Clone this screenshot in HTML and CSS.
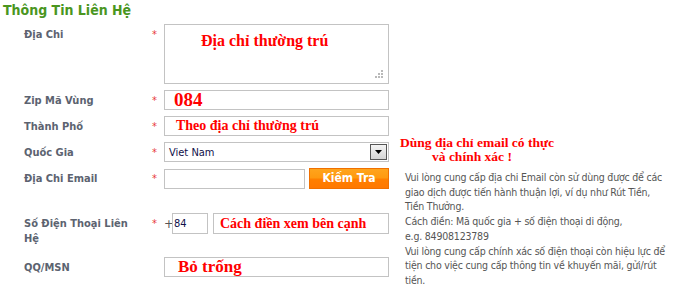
FILE: index.html
```html
<!DOCTYPE html>
<html lang="vi">
<head>
<meta charset="utf-8">
<title>Thông Tin Liên Hệ</title>
<link rel="stylesheet" href="styles.css">
</head>
<body>
<h2 class="title">Thông Tin Liên Hệ</h2>
<div class="wrap">
  <div class="form">
    <div class="row row-area">
      <label class="lbl">Địa Chi</label>
      <span class="star">*</span>
      <div class="field area-box">
        <div class="area"><span class="red r16">Địa chỉ thường trú</span></div>
        <svg class="grip" width="9" height="9" viewBox="0 0 9 9"><g fill="#b9b9b9"><rect x="6" y="0" width="2" height="2"/><rect x="3" y="3" width="2" height="2"/><rect x="6" y="3" width="2" height="2"/><rect x="0" y="6" width="2" height="2"/><rect x="3" y="6" width="2" height="2"/><rect x="6" y="6" width="2" height="2"/></g></svg>
      </div>
    </div>
    <div class="row">
      <label class="lbl">Zip Mã Vùng</label>
      <span class="star">*</span>
      <div class="field box zip"><span class="red r18">084</span></div>
    </div>
    <div class="row">
      <label class="lbl">Thành Phố</label>
      <span class="star">*</span>
      <div class="field box city"><span class="red r14">Theo địa chỉ thường trú</span></div>
    </div>
    <div class="row">
      <label class="lbl">Quốc Gia</label>
      <span class="star">*</span>
      <div class="field box select"><span class="val">Viet Nam</span><span class="arrow"><svg width="7" height="4" viewBox="0 0 7 4"><path d="M0 0h7L3.5 4z" fill="#000"/></svg></span></div>
    </div>
    <div class="row row-email">
      <label class="lbl">Địa Chi Email</label>
      <span class="star">*</span>
      <div class="field email-field">
        <div class="box email"></div>
        <button class="btn" type="button">Kiếm Tra</button>
      </div>
    </div>
    <div class="row row-phone">
      <label class="lbl two">Số Điện Thoại Liên Hệ</label>
      <span class="star">*</span>
      <div class="field phone-field">
        <span class="plus">+</span>
        <div class="box cc"><span class="val">84</span></div>
        <div class="box phone"><span class="red r14">Cách điền xem bên cạnh</span></div>
      </div>
    </div>
    <div class="row">
      <label class="lbl">QQ/MSN</label>
      <span class="star"></span>
      <div class="field box qq"><span class="red r17">Bỏ trống</span></div>
    </div>
  </div>
  <div class="help">
    <div class="help-red">Dùng địa chỉ email có thực<br><span class="indent">và chính xác !</span></div>
    <p class="help-text">Vui lòng cung cấp địa chi Email còn sử dùng được để các<br>giao dịch được tiến hành thuận lợi, ví dụ như Rút Tiền,<br>Tiền Thưởng.<br>Cách điền: Mã quốc gia + số điện thoại di động,<br>e.g. 84908123789<br>Vui lòng cung cấp chính xác số điện thoại còn hiệu lực để<br>tiện cho việc cung cấp thông tin về khuyến mãi, gửi/rút<br>tiền.</p>
  </div>
</div>
</body>
</html>
```

FILE: styles.css
```css
* { box-sizing: border-box; }
html, body { margin: 0; padding: 0; background: #fff; }
body {
  font-family: "DejaVu Sans Condensed", "DejaVu Sans", sans-serif;
  font-size: 11px;
  color: #555;
  width: 683px;
  height: 298px;
  overflow: hidden;
}
.title {
  margin: 0;
  padding: 2px 0 0 3px;
  height: 24px;
  font-size: 14px;
  line-height: 17px;
  font-weight: bold;
  color: #4a961f;
}
.wrap { display: flex; }
.form { width: 389px; flex: none; }
.row {
  display: flex;
  align-items: flex-start;
  margin-bottom: 6px;
}
.row-email { margin-bottom: 24px; }
.row-phone { margin-bottom: 11px; }
.lbl {
  width: 149px;
  padding-left: 24px;
  padding-top: 3px;
  font-weight: bold;
  color: #5c6370;
  line-height: 15px;
  flex: none;
}
.lbl.two { padding-right: 20px; }
.star {
  width: 15px;
  flex: none;
  color: #e83a3a;
  padding-top: 4px;
  padding-left: 3px;
  line-height: 14px;
}
.field { width: 225px; flex: none; }
.box {
  border: 1px solid #c3c3c3;
  background: #fff;
  height: 20px;
  display: flex;
  align-items: center;
}
.area-box {
  position: relative;
  height: 60px;
  border: 1px solid #c3c3c3;
}
.area { padding: 7px 0 0 36px; }
.grip { position: absolute; right: 4px; bottom: 4px; }
.red {
  font-family: "Liberation Serif", "DejaVu Serif", serif;
  font-weight: bold;
  color: #f00;
  white-space: nowrap;
}
.r14 { font-size: 14px; }
.r16 { font-size: 16px; }
.r17 { font-size: 17px; }
.r18 { font-size: 19px; }
.zip { padding-left: 9px; }
.city { padding-left: 11px; }
.qq { padding-left: 13px; }
.val { color: #10104a; font-size: 11px; }
.select { padding-left: 4px; justify-content: space-between; padding-right: 1px; }
.arrow {
  width: 17px;
  height: 16px;
  border: 1px solid #555;
  background: linear-gradient(#f4f4f4, #d4d4d4);
  display: flex;
  align-items: center;
  justify-content: center;
}
.email-field { display: flex; align-items: flex-start; }
.email { width: 141px; margin-top: 1px; }
.btn {
  margin-left: 4px;
  width: 80px;
  height: 21px;
  border: 1px solid #f07000;
  background: linear-gradient(#ffa41c 0%, #ff9a10 45%, #ff7f00 55%, #ff7800 100%);
  color: #fff;
  font-family: "DejaVu Sans Condensed", "DejaVu Sans", sans-serif;
  font-size: 12px;
  font-weight: bold;
  padding: 0;
  line-height: 19px;
}
.phone-field { display: flex; align-items: center; }
.plus { width: 8px; color: #555; font-size: 13px; line-height: 21px; }
.cc { width: 36px; height: 21px; padding-left: 1px; }
.phone { margin-left: 5px; width: 176px; height: 21px; padding-left: 6px; }
.help { padding: 112px 0 0 11px; }
.help-red {
  font-family: "Liberation Serif", "DejaVu Serif", serif;
  font-weight: bold;
  color: #f00;
  font-size: 13.5px;
  line-height: 14px;
}
.indent { padding-left: 32px; }
.help-text {
  margin: 6px 0 0 5px;
  font-size: 10.5px;
  letter-spacing: -0.2px;
  line-height: 14.7px;
  white-space: nowrap;
  color: #555;
}
```
